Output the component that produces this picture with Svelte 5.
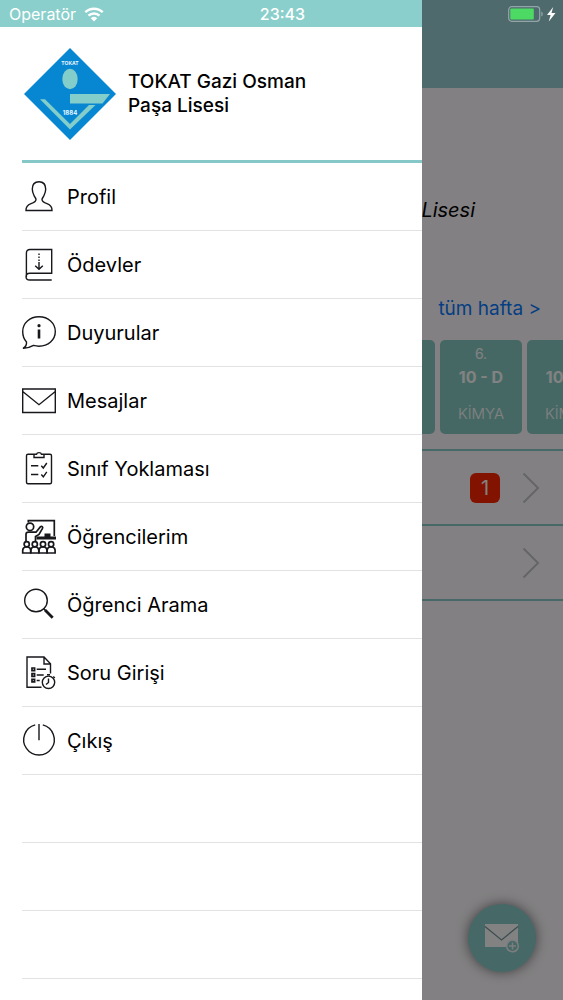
<script>
  const items = [
    { id: 'profile', label: 'Profil' },
    { id: 'homework', label: 'Ödevler' },
    { id: 'news', label: 'Duyurular' },
    { id: 'mail', label: 'Mesajlar' },
    { id: 'roll', label: 'Sınıf Yoklaması' },
    { id: 'students', label: 'Öğrencilerim' },
    { id: 'search', label: 'Öğrenci Arama' },
    { id: 'questions', label: 'Soru Girişi' },
    { id: 'exit', label: 'Çıkış' }
  ];
  const seats = [4.7, 12.8, 21, 29.1];
  const checks = [13.7, 22.5];
  const bullets = [13, 18.7, 24.3];
</script>

<div class="app">
  <main class="page">
    <header class="topbar"></header>
    <section class="school"><em>Lisesi</em></section>
    <section class="week">
      <a class="all" href="#week">tüm hafta &gt;</a>
      <div class="lessons">
        <article class="lesson"></article>
        {#each ['6.', ''] as order}
          <article class="lesson">
            <span class="order">{order}</span>
            <strong>10 - D</strong>
            <span class="subject">KİMYA</span>
          </article>
        {/each}
      </div>
    </section>
    <ul class="links">
      {#each [1, 0] as count}
        <li>
          {#if count}<span class="badge">{count}</span>{/if}
          <svg class="chevron" viewBox="0 0 18 32" aria-hidden="true"><path d="M1.5 1.500 16 16 1.500 30.500" /></svg>
        </li>
      {/each}
    </ul>
    <button class="compose" type="button" aria-label="Mesaj">
      <svg viewBox="0 0 36 30" aria-hidden="true">
        <path d="M1 1h33v23H1z" fill="#fff" />
        <path d="M1 3.500 17.500 17 34 3.500" fill="none" stroke="#7a9a9e" stroke-width="1.300" />
        <circle cx="28.500" cy="23" r="5.800" fill="#8acdca" stroke="#f4f6fa" stroke-width="1.500" />
        <path d="M28.500 19.500v7M25 23h7" stroke="#f4f6fa" stroke-width="1.500" />
      </svg>
    </button>
  </main>

  <div class="shade"></div>

  <aside class="drawer">
    <div class="drawer-top"></div>
    <div class="content">
      <div class="brand">
        <svg class="logo" viewBox="0 0 92 92" aria-hidden="true">
          <path d="M46 0 92 46 46 92 0 46z" fill="#0787d2" />
          <ellipse cx="46" cy="31" rx="7.700" ry="10.200" fill="#83cdca" />
          <path d="M46 46h40l-7.500 9.500H46zM16 51.300h5L46 76l19-19h6.500L46 81.500z" fill="#83cdca" />
          <text x="46" y="17" font-size="5">TOKAT</text>
          <text x="46" y="67" font-size="6">1884</text>
        </svg>
        <h1>TOKAT Gazi Osman Paşa Lisesi</h1>
      </div>
      <nav>
        {#each items as item}
          <a href={'#' + item.id}>
            <svg class="icon" viewBox="0 0 34 34" aria-hidden="true">
              {#if item.id === 'profile'}
                <path d="M4 30.500h26c.2-4-1.500-5.500-5-6.800-3.500-1.300-5-2-5-4.200 0-1.500 1.200-2 2-4 .8-1.700 1.700-3.500 1.700-6.500 0-4.500-2.700-7.200-6.700-7.200S10.300 4.500 10.300 9c0 3 .9 4.800 1.700 6.500.8 2 2 2.500 2 4 0 2.200-1.500 2.900-5 4.200-3.500 1.300-5.200 2.800-5 6.800z" />
              {:else if item.id === 'homework'}
                <path d="M29.700 32H7.800c-5 0-5-6.700 0-6.700h21.900V1.500H8C5.500 1.500 4.400 2.800 4.400 5v24M17 14v7M13.200 17.800l3.800 3.500 3.800-3.500" />
                <path d="M17 5.500v8" stroke-dasharray="1.500 1.500" />
              {:else if item.id === 'news'}
                <path d="M1 32.300c3-1.500 3.800-3.300 3.500-6.300C2 23.300.7 19.500.7 15.500.7 7 7.800.8 17 .8s16.300 6.200 16.300 14.700S26.200 30.200 17 30.200c-2 0-3.800-.3-5.500-.8-3.500 2-7 3-10.500 2.900z" />
                <path d="M17 13.500v9" stroke-width="2.600" />
                <circle class="solid" cx="17" cy="9.700" r="1.600" />
              {:else if item.id === 'mail'}
                <path d="M.7 5h32.600v23.500H.7zM.7 7.500 17 20.700 33.300 7.500" />
              {:else if item.id === 'roll'}
                <path d="M12 2.300H6c-1 0-1.500.5-1.500 1.500v26.400c0 1 .5 1.500 1.500 1.500h22c1 0 1.500-.5 1.500-1.500V3.800c0-1-.5-1.500-1.500-1.500h-6M12 5.500V2.300h2.500c.5-2.300 4.500-2.300 5 0H22v3.200z" />
                {#each checks as y}
                  <path d={`M9 ${y}h7.300M19.300 ${y}l2 2.300 3.500-5`} />
                {/each}
              {:else if item.id === 'students'}
                <g stroke-width="1.700">
                  <path d="M6.300 2.500V.7h26V16M4 21v-6.500c0-1.500 1-2.300 2.500-2.300H14l4.500-5.500c1.300-1 2.700.2 2 1.700L17 14.500l-3.500 2V21" />
                  <circle cx="8" cy="6.800" r="3.700" />
                  {#each seats as x}
                    <circle cx={x} cy="24.300" r="2.600" />
                    <path d={`M${x - 4} 33v-2.500c0-2 1-3 2.500-3.500h3c1.500.5 2.500 1.500 2.500 3.500V33z`} />
                  {/each}
                </g>
                <path class="solid" d="M14.500 16.500h8v-3h6v3h5.500v3H14.500z" />
              {:else if item.id === 'search'}
                <circle cx="14" cy="12.500" r="11.300" />
                <path d="m21.500 20.500 2.500 2.500" />
                <path d="m23 22 7.700 7.700" stroke-width="2.800" />
              {:else if item.id === 'questions'}
                <path d="M28.500 17.500V7.800L22 1H5v30.300h14.500M22 1v7h6.500M14.700 13.300H24M14.700 19h7M14.700 24.500h3" />
                {#each bullets as y}
                  <path d={`M10 ${y - 1}h2.600v2.600H10z`} stroke-width="1.700" />
                {/each}
                <circle cx="26.500" cy="26.300" r="6.200" />
                <path d="M26.500 22.500v4L24 28.500M25 18.700h3M31.300 20.500l1.500 1.500" />
              {:else}
                <path d="M13.200.9a15.300 15.300 0 1 0 7.600 0M17 0v16.300" />
              {/if}
            </svg>
            <span>{item.label}</span>
          </a>
        {/each}
        {#each [1, 2, 3] as row (row)}
          <div class="blank"></div>
        {/each}
      </nav>
    </div>
  </aside>

  <div class="status">
    <span class="carrier">
      Operatör
      <svg width="20" height="15" viewBox="0 0 20 15" aria-hidden="true">
        <path d="M1.300 5.200a12.500 12.500 0 0 1 17.400 0M4.500 8.700a8 8 0 0 1 11 0" fill="none" stroke="#fff" stroke-width="2.400" />
        <path d="M10 14.500 6.800 11.200a4.800 4.800 0 0 1 6.400 0z" fill="#fff" />
      </svg>
    </span>
    <time>23:43</time>
    <span class="power">
      <svg width="48" height="16" viewBox="0 0 48 16" aria-hidden="true">
        <rect x=".7" y=".7" width="31" height="14.600" rx="3" fill="none" stroke="#93a5a8" stroke-width="1.200" />
        <rect x="2.300" y="2.500" width="23.500" height="11" rx="1" fill="#4cd964" />
        <path d="M33.300 5.500c2 .7 2 4.300 0 5z" fill="#93a5a8" />
        <path d="M45.200 1 39 9h3.600l-1.800 6.500L47.500 7h-4z" fill="#fff" />
      </svg>
    </span>
  </div>
</div>

<style>
  :global(body) { margin: 0; }
  .app {
    position: relative;
    min-height: 100vh;
    overflow: hidden;
    font-family: Inter, "Liberation Sans", sans-serif;
    color: #000;
  }
  a { color: inherit; text-decoration: none; }
  .page {
    display: flex;
    flex-direction: column;
    min-height: 100vh;
    background: #fffcff;
  }
  .topbar { height: 88px; background: #9ad0d5; }
  .school {
    padding: 108px 88px 0 0;
    font-size: 20px;
    line-height: 28px;
    text-align: right;
  }
  .week { padding-top: 72px; overflow: hidden; }
  .all {
    display: block;
    padding-right: 22px;
    font-size: 19px;
    line-height: 26px;
    text-align: right;
    color: #0a7aff;
  }
  .lessons {
    display: flex;
    justify-content: flex-end;
    gap: 5px;
    margin: 18px -46px 15px 0;
  }
  .lesson {
    box-sizing: border-box;
    display: flex;
    flex: none;
    flex-direction: column;
    align-items: center;
    width: 82px;
    height: 94px;
    padding-top: 4px;
    border-radius: 5px;
    background: #8acdc6;
    color: #fff;
    font-size: 14px;
    line-height: 20px;
  }
  .order { height: 20px; }
  .lesson strong { font-size: 16px; line-height: 26px; }
  .subject { margin-top: 14px; font-size: 15px; font-weight: 300; }
  .links {
    margin: 0;
    padding: 0;
    list-style: none;
    border-top: 2px solid #8acdca;
  }
  .links li {
    display: flex;
    align-items: center;
    justify-content: flex-end;
    gap: 22px;
    height: 73px;
    padding-right: 23px;
    border-bottom: 2px solid #8acdca;
  }
  .badge {
    width: 30px;
    border-radius: 6px;
    background: #ff2600;
    color: #fff;
    font-size: 20px;
    line-height: 30px;
    text-align: center;
  }
  .chevron { width: 18px; height: 32px; fill: none; stroke: #c7c7cc; stroke-width: 2; }
  .compose {
    display: grid;
    place-items: center;
    align-self: flex-end;
    width: 68px;
    height: 68px;
    margin: auto 27px 28px 0;
    padding: 0;
    border: 0;
    border-radius: 50%;
    background: #8acdca;
    box-shadow: 0 0 12px 1px rgb(0 0 0 / 45%);
  }
  .compose svg { width: 36px; height: 30px; }
  .shade { position: absolute; inset: 0; background: rgb(0 0 0 / 49%); }
  .drawer {
    position: absolute;
    inset: 0 25% 0 0;
    overflow: hidden;
    background: #fff;
  }
  .drawer-top { height: 27px; background: #8acfcb; }
  .content { padding-left: 22px; }
  .brand {
    display: flex;
    align-items: center;
    gap: 12px;
    height: 133px;
    padding-left: 2px;
    border-bottom: 3px solid #86c8c8;
  }
  .logo { flex: none; width: 92px; height: 92px; }
  .logo text { fill: #e6f6ff; font-weight: 700; text-anchor: middle; }
  h1 {
    width: 200px;
    margin: 0;
    font-size: 19px;
    font-weight: 500;
    line-height: 24px;
  }
  nav a, .blank {
    box-sizing: border-box;
    display: flex;
    align-items: center;
    gap: 11px;
    height: 68px;
    border-bottom: 1px solid #e2e2e4;
    font-size: 20px;
  }
  .icon {
    flex: none;
    width: 34px;
    height: 34px;
    overflow: visible;
    fill: none;
    stroke: #17171c;
    stroke-width: 1.4;
  }
  .solid { fill: #17171c; stroke: none; }
  .status {
    position: absolute;
    inset: 0 0 auto 0;
    display: grid;
    grid-template-columns: 1fr auto 1fr;
    align-items: center;
    height: 28px;
    padding: 0 7px 0 9px;
    color: #fff;
    font-size: 16px;
  }
  .carrier { display: flex; align-items: center; gap: 8px; }
  time { font-weight: 500; }
  .power { display: flex; justify-content: flex-end; }
</style>
